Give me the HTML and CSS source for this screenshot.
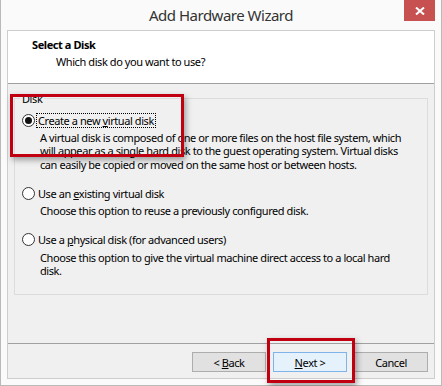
FILE: index.html
```html
<!DOCTYPE html>
<html lang="en">
<head>
    <meta charset="UTF-8">
    <title>Add Hardware Wizard</title>
    <link rel="stylesheet" href="styles.css">
</head>
<body>
    <div class="window">
        <div class="titlebar">
            <span class="title">Add Hardware Wizard</span>
            <button class="close-btn" aria-label="Close">
                <svg width="10" height="8" viewBox="0 0 10 8">
                    <path d="M1 0.5 L9 7.5 M9 0.5 L1 7.5" stroke="#fff" stroke-width="2"/>
                </svg>
            </button>
        </div>
        <div class="client">
            <div class="header">
                <div class="heading">Select a Disk</div>
                <div class="subheading">Which disk do you want to use?</div>
            </div>
            <div class="content">
                <fieldset class="group">
                    <legend>Disk</legend>
                    <div class="option">
                        <label class="radio-row">
                            <span class="radio checked"></span>
                            <span class="radio-label focused">Create a new <u>v</u>irtual disk</span>
                        </label>
                        <p class="desc">A virtual disk is composed of one or more files on the host file system, which<br>will appear as a single hard disk to the guest operating system. Virtual disks<br>can easily be copied or moved on the same host or between hosts.</p>
                    </div>
                    <div class="option">
                        <label class="radio-row">
                            <span class="radio"></span>
                            <span class="radio-label">Use an <u>e</u>xisting virtual disk</span>
                        </label>
                        <p class="desc">Choose this option to reuse a previously configured disk.</p>
                    </div>
                    <div class="option">
                        <label class="radio-row">
                            <span class="radio"></span>
                            <span class="radio-label">Use a <u>p</u>hysical disk (for advanced users)</span>
                        </label>
                        <p class="desc">Choose this option to give the virtual machine direct access to a local hard<br>disk.</p>
                    </div>
                </fieldset>
            </div>
            <div class="footer">
                <button class="btn">&lt; <u>B</u>ack</button>
                <button class="btn btn-default"><u>N</u>ext &gt;</button>
                <button class="btn">Cancel</button>
            </div>
        </div>
        <div class="highlight highlight-option"></div>
        <div class="highlight highlight-next"></div>
    </div>
</body>
</html>
```

FILE: styles.css
```css
* {
    box-sizing: border-box;
}
body {
    margin: 0;
    background: #fff;
    font-family: 'Noto Sans', 'Open Sans', Arial, sans-serif;
    font-size: 11px;
    line-height: 13px;
    letter-spacing: -0.42px;
    color: #000;
}
.window {
    position: relative;
    width: 442px;
    height: 386px;
    background: #fafafa;
    border: 1px solid #b9b9b9;
    border-top: none;
    padding: 0 6px 6px;
    display: flex;
    flex-direction: column;
}
.titlebar {
    height: 30px;
    flex-shrink: 0;
    display: flex;
    align-items: center;
    justify-content: center;
    position: relative;
}
.title {
    font-size: 15px;
    letter-spacing: -0.5px;
    color: #333;
    margin-top: 1px;
}
.close-btn {
    position: absolute;
    right: 0;
    top: 0;
    width: 31px;
    height: 21px;
    border: none;
    background: #c75050;
    padding: 0;
    display: flex;
    align-items: center;
    justify-content: center;
}
.client {
    flex: 1;
    border: 1px solid #cdcdcd;
    display: flex;
    flex-direction: column;
    background: #f0f0f0;
}
.header {
    height: 53px;
    background: #fff;
    border-bottom: 1px solid #a0a0a0;
    padding: 7px 0 0 24px;
}
.heading {
    font-weight: 700;
}
.subheading {
    margin: 4px 0 0 24px;
}
.content {
    flex: 1;
    border-bottom: 1px solid #a0a0a0;
    padding: 8px 6px 0;
}
.group {
    margin: 0;
    border: 1px solid #dcdcdc;
    padding: 8px 0 17px 7px;
}
.group legend {
    padding: 0 2px;
    margin-left: -2px;
}
.option + .option {
    margin-top: 15px;
}
.radio-row {
    display: flex;
    align-items: center;
    height: 14px;
}
.radio {
    width: 13px;
    height: 13px;
    border-radius: 50%;
    border: 1px solid #333;
    background: #fff;
    display: flex;
    align-items: center;
    justify-content: center;
    margin-right: 2px;
}
.radio.checked::after {
    content: "";
    width: 7px;
    height: 7px;
    border-radius: 50%;
    background: #111;
}
.radio-label {
    padding: 0 1px;
}
.radio-label.focused {
    outline: 1px dotted #000;
    outline-offset: 0;
}
.desc {
    margin: 4px 0 0 18px;
    line-height: 13.4px;
}
.footer {
    height: 34px;
    display: flex;
    justify-content: flex-end;
    align-items: flex-start;
    gap: 7px;
    padding: 8px 6px 0;
}
.btn {
    width: 74px;
    height: 20px;
    font: inherit;
    letter-spacing: inherit;
    color: #000;
    background: #e1e1e1;
    border: 1px solid #adadad;
    padding: 0;
}
.btn-default {
    background: #e5f1fb;
    border-color: #7eb4ea;
}
.highlight {
    position: absolute;
    border: 3px solid #c00010;
    box-shadow: 2px 3px 6px rgba(0, 0, 0, 0.35);
}
.highlight-option {
    left: 9px;
    top: 94px;
    width: 174px;
    height: 63px;
}
.highlight-next {
    left: 266px;
    top: 338px;
    width: 88px;
    height: 45px;
}
```
